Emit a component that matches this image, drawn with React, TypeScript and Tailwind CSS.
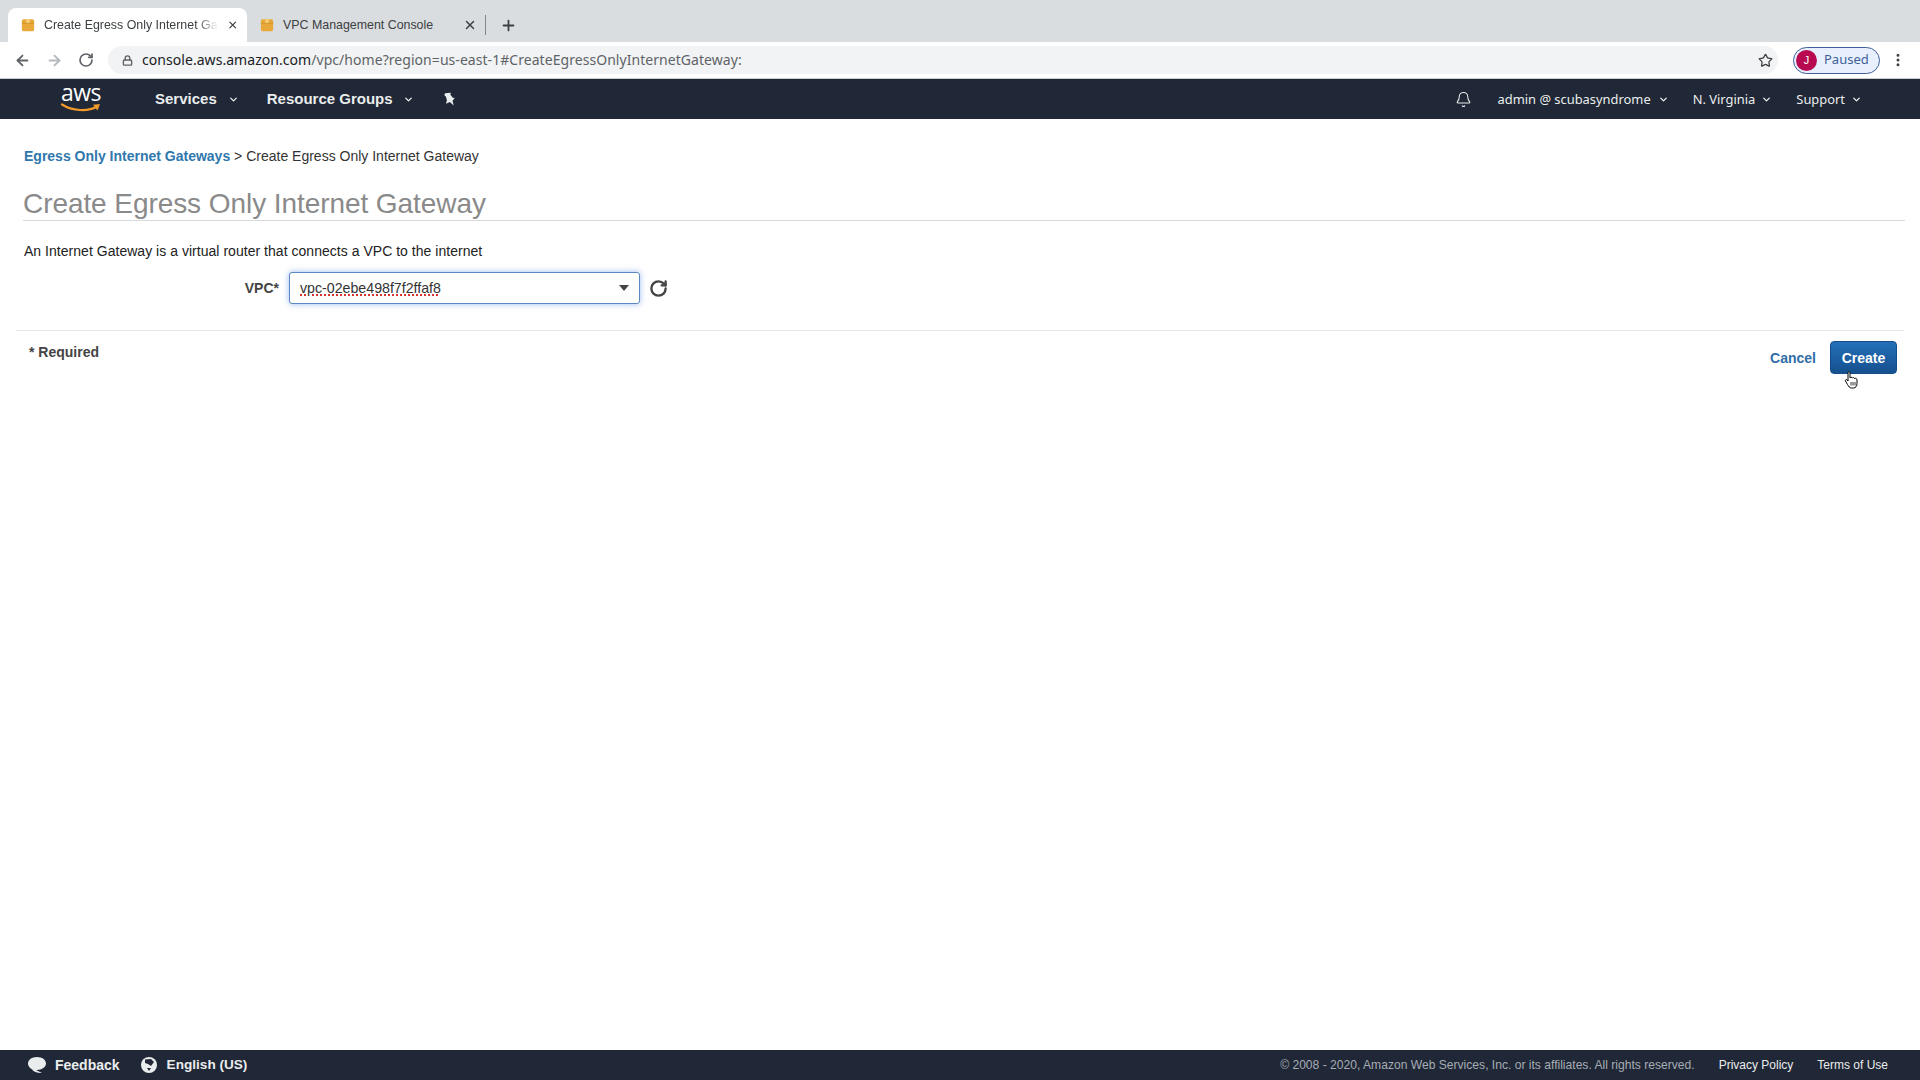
import React from "react";
import { ArrowLeft, ArrowRight, Bell, ChevronDown, EllipsisVertical, Lock, Plus, RotateCw, Star, X } from "lucide-react";

function AwsBox() {
  return (
    <svg viewBox="0 0 16 16" className="w-[14px] h-[14px] shrink-0">
      <path d="M1 3.5 C1 2 2 1.5 3.5 1.5 H12.5 C14 1.5 15 2 15 3.5 V13 C15 14.5 14 15 12.5 15 H3.5 C2 15 1 14.5 1 13Z" fill="#e8a93a" />
      <path d="M6 1.5 H10 V6 H6Z" fill="#f6d27a" />
      <path d="M1 6 H15" stroke="#c98a22" strokeWidth="0.8" />
    </svg>
  );
}

function Tab({ title, active, fade }: { title: string; active?: boolean; fade?: boolean }) {
  return (
    <div className={`flex items-center h-[34px] w-[239px] pl-[13px] pr-[9px] gap-[9px] rounded-t-lg ${active ? "bg-white" : ""}`}>
      <AwsBox />
      <span className={`flex-1 whitespace-nowrap text-[12.4px] text-[#3c4043] ${fade ? "[mask-image:linear-gradient(to_right,black_88%,transparent)]" : ""}`}>
        {title}
      </span>
      <X className="w-[14px] h-[14px] text-[#3c4043]" strokeWidth={2.5} />
    </div>
  );
}

function NavMenu({ label, bold, gap }: { label: string; bold?: boolean; gap: string }) {
  return (
    <div className={`flex items-center ${gap}`}>
      <span className={bold ? "text-[15px] font-bold" : "text-[12.9px] font-['Noto_Sans',sans-serif] text-[#eaeded]"}>{label}</span>
      <ChevronDown className="w-[11px] h-[11px]" strokeWidth={3} />
    </div>
  );
}

function PinIcon() {
  return (
    <svg viewBox="0 0 16 16" className="w-[14px] h-[14px]" fill="#eaeded">
      <path d="M3.5 1.5 L10 0.8 L9.6 3 L12.4 6.6 L14.6 6.8 L12 10 L13.4 15.4 L9 11.4 L4.6 13.4 L5.6 9.4 L4.4 5 L2.6 3.6 Z" />
    </svg>
  );
}

function AwsLogo() {
  return (
    <div className="flex flex-col items-center w-[42px] h-[34px] mt-[-4px]">
      <span className="text-[23px] leading-[24px] tracking-[-0.5px] text-white font-['Open_Sans',sans-serif]">aws</span>
      <svg viewBox="0 0 42 10" className="w-[42px] h-[10px] mt-[-1px]">
        <path d="M2 1.5 C12 8 28 9 37 3.5" stroke="#f09a2a" strokeWidth="2.2" fill="none" strokeLinecap="round" />
        <path d="M33 1.8 L40 1 L37.5 7.5" fill="#f09a2a" />
      </svg>
    </div>
  );
}

function HandCursor() {
  return (
    <svg viewBox="0 0 16 18" className="absolute left-[1844px] top-[371px] w-[16px] h-[18px]">
      <path
        d="M4 1.5 C4 .6 6 .6 6 1.5 V7 C6.5 6 8 6 8.3 7 C9 6.2 10.3 6.5 10.5 7.5 C11.2 7 12.8 7.2 13 8.6 V12.5 C13 15 11.8 17 9.5 17 H7.5 C5.5 17 4.8 15.5 3.5 13.5 L1.5 10 C1 8.8 2.4 8 3.3 9 L4 10 Z"
        fill="white"
        stroke="black"
        strokeWidth="1"
      />
      <path d="M7 11 V14.5 M9 11 V14.5 M11 11 V14.5" stroke="black" strokeWidth="0.8" />
    </svg>
  );
}

export default function App() {
  return (
    <div className="relative flex flex-col h-screen w-full overflow-hidden bg-white font-['Liberation_Sans',Arial,sans-serif] text-[#16191f]">
      {/* browser tabs */}
      <div className="flex items-end h-[42px] pl-[8px] bg-[#dadddf] shrink-0">
        <Tab title="Create Egress Only Internet Ga" active fade />
        <Tab title="VPC Management Console" />
        <div className="self-center mt-[8px] ml-[-1px] w-px h-[20px] bg-[#80868b]" />
        <Plus className="self-center mt-[8px] ml-[14px] w-[17px] h-[17px] text-[#3c4043]" strokeWidth={2.5} />
      </div>

      {/* address bar */}
      <div className="flex items-center h-[37px] pl-[14px] pr-[14px] bg-white border-b border-[#c9cbce] shrink-0">
        <ArrowLeft className="w-[17px] h-[17px] text-[#5f6368]" strokeWidth={2.5} />
        <ArrowRight className="ml-[15px] w-[17px] h-[17px] text-[#b4b7bb]" strokeWidth={2.5} />
        <RotateCw className="ml-[15px] w-[16px] h-[16px] text-[#5f6368]" strokeWidth={2.5} />
        <div className="flex items-center flex-1 h-[28px] ml-[14px] pl-[14px] pr-[5px] rounded-full bg-[#f1f3f4]">
          <Lock className="w-[11px] h-[11px] text-[#5f6368]" strokeWidth={3} />
          <span className="ml-[9px] mb-[2px] text-[14px] tracking-[0.05px] text-[#202124] whitespace-nowrap font-['Noto_Sans',sans-serif]">
            console.aws.amazon.com<span className="text-[#5f6368]">/vpc/home?region=us-east-1#CreateEgressOnlyInternetGateway:</span>
          </span>
          <Star className="ml-auto w-[15px] h-[15px] text-[#3c4043]" strokeWidth={2} />
        </div>
        <div className="flex items-center ml-[15px] w-[87px] h-[27px] pl-[2px] rounded-full border border-[#3f5f96] bg-[#e8f0fe]">
          <div className="flex items-center justify-center w-[21px] h-[21px] rounded-full bg-[#b80a50] text-white text-[11px]">J</div>
          <span className="ml-[7px] text-[13px] text-[#3f5f96] font-['Noto_Sans',sans-serif]">Paused</span>
        </div>
        <EllipsisVertical className="ml-[10px] w-[16px] h-[16px] text-[#3c4043]" strokeWidth={2.5} />
      </div>

      {/* aws console header */}
      <div className="flex items-center h-[40px] pl-[60px] pr-[58px] bg-[#202736] text-[#eaeded] shrink-0">
        <AwsLogo />
        <div className="ml-[53px] pt-[1px]"><NavMenu label="Services" bold gap="gap-[11px]" /></div>
        <div className="ml-[28px] pt-[1px]"><NavMenu label="Resource Groups" bold gap="gap-[10px]" /></div>
        <div className="ml-[28px]"><PinIcon /></div>
        <Bell className="ml-auto w-[17px] h-[17px]" strokeWidth={1.5} />
        <div className="ml-[26px] pt-[1px]"><NavMenu label="admin @ scubasyndrome" gap="gap-[7px]" /></div>
        <div className="ml-[24px] pt-[1px]"><NavMenu label="N. Virginia" gap="gap-[6px]" /></div>
        <div className="ml-[24px] pt-[1px]"><NavMenu label="Support" gap="gap-[6px]" /></div>
      </div>

      {/* page */}
      <main className="flex-1 pt-[27px] px-[16px]">
        <div className="px-[8px] text-[14px] leading-[20px] text-[#333]">
          <span className="font-bold text-[#2f77ad]">Egress Only Internet Gateways</span> &gt; Create Egress Only Internet Gateway
        </div>
        <div className="mt-[17px] ml-[7px] mr-[-1px] h-[38px] border-b border-[#d5dbdb]">
          <h1 className="text-[28px] leading-[41px] tracking-[-0.07px] text-[#8a8a8a]">Create Egress Only Internet Gateway</h1>
        </div>
        <p className="mt-[20px] ml-[8px] text-[14px] leading-[20px] tracking-[0.03px] text-[#222]">An Internet Gateway is a virtual router that connects a VPC to the internet</p>

        <div className="flex items-center mt-[11px] pb-[26px] border-b border-[#e4e7e7]">
          <label className="w-[263px] text-right text-[14px] font-bold text-[#444]">VPC*</label>
          <div className="flex items-center ml-[10px] w-[351px] h-[32px] pl-[10px] pr-[10px] rounded-[3px] border border-[#5a8ac6] shadow-[0_0_6px_rgba(70,130,220,0.55)] bg-white">
            <span className="pt-[1px] text-[14.2px] text-[#333] underline decoration-dotted decoration-[#d9322e] decoration-2 underline-offset-2">vpc-02ebe498f7f2ffaf8</span>
            <div className="ml-auto w-0 h-0 border-x-[5px] border-x-transparent border-t-[6px] border-t-[#444]" />
          </div>
          <RotateCw className="ml-[9px] w-[19px] h-[19px] text-[#444]" strokeWidth={3} />
        </div>

        <div className="flex items-start justify-between pl-[13px] pr-[7px]">
          <div className="mt-[11px] text-[14px] leading-[20px] font-bold text-[#444]">* Required</div>
          <div className="flex items-center mt-[10px]">
            <span className="pt-[1px] text-[14px] font-bold text-[#2f6ea8]">Cancel</span>
            <button className="ml-[14px] w-[67px] h-[33px] pt-[1px] rounded-[4px] bg-linear-to-b from-[#2470b8] to-[#15508f] border border-[#154e8c] text-white text-[14px] font-bold">Create</button>
          </div>
        </div>
      </main>

      {/* footer */}
      <div className="flex items-center h-[30px] pl-[27px] pr-[32px] bg-[#202736] text-[#eaeded] shrink-0">
        <svg viewBox="0 0 20 18" className="w-[20px] h-[18px]" fill="#eaeded">
          <path d="M10 1 C15 1 19 3.8 19 7.5 C19 11 15 14 10 14 L9 14 L15 17 C10 17 6 15.5 5 13.2 C2.5 12 1 10 1 7.5 C1 3.8 5 1 10 1Z" />
        </svg>
        <span className="ml-[8px] text-[14px] font-bold">Feedback</span>
        <svg viewBox="0 0 16 16" className="ml-[21px] w-[16px] h-[16px]">
          <circle cx="8" cy="8" r="8" fill="#eaeded" />
          <path d="M4 2.5 L10 2 L13 5 L10 9 L7 7 L4 6Z M6 11 L10 11 L8 14Z" fill="#202736" />
        </svg>
        <span className="ml-[10px] text-[13.6px] font-bold">English (US)</span>
        <span className="ml-auto text-[12.1px] text-[#a6adb5]">© 2008 - 2020, Amazon Web Services, Inc. or its affiliates. All rights reserved.</span>
        <span className="ml-[24px] text-[12px]">Privacy Policy</span>
        <span className="ml-[24px] text-[12px]">Terms of Use</span>
      </div>

      <HandCursor />
    </div>
  );
}
